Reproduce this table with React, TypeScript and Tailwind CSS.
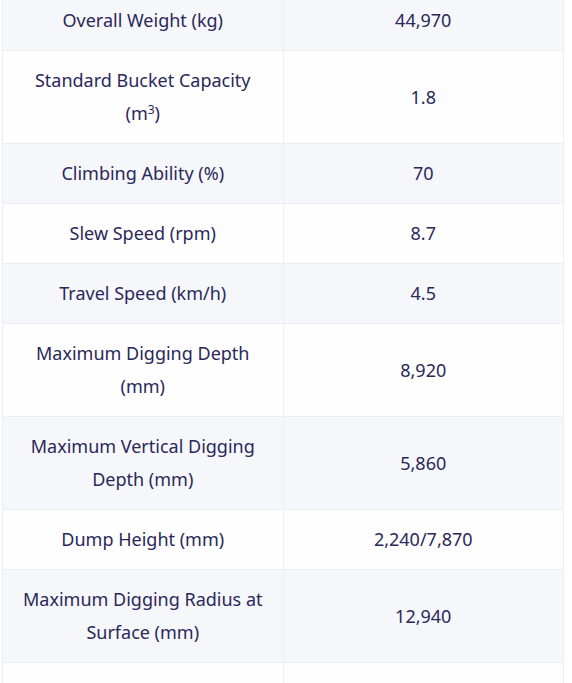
const rows: [React.ReactNode, string][] = [
  ["Overall Weight (kg)", "44,970"],
  [
    <>
      Standard Bucket Capacity (m<sup className="text-[12px] leading-none">3</sup>)
    </>,
    "1.8",
  ],
  ["Climbing Ability (%)", "70"],
  ["Slew Speed (rpm)", "8.7"],
  ["Travel Speed (km/h)", "4.5"],
  ["Maximum Digging Depth (mm)", "8,920"],
  ["Maximum Vertical Digging Depth (mm)", "5,860"],
  ["Dump Height (mm)", "2,240/7,870"],
  ["Maximum Digging Radius at Surface (mm)", "12,940"],
  ["", ""],
];

export default function App() {
  return (
    <div className="h-[683px] overflow-hidden bg-white pl-[2px] pr-[8px]">
      <table
        className="-mt-[10px] w-full table-fixed border-collapse text-[18px] leading-[33px] text-[#2a285a]"
        style={{ fontFamily: '"Noto Sans", "Open Sans", sans-serif' }}
      >
        <tbody>
          {rows.map(([label, value], i) => (
            <tr key={i} className={i % 2 === 0 ? "bg-[#f6f7fb]" : "bg-[#fefefe]"}>
              <td className="border border-[#eceef3] px-[18px] py-[13px] text-center">
                {label || <span className="invisible">-</span>}
              </td>
              <td className="border border-[#eceef3] px-[18px] py-[13px] text-center">
                {value}
              </td>
            </tr>
          ))}
        </tbody>
      </table>
    </div>
  );
}
